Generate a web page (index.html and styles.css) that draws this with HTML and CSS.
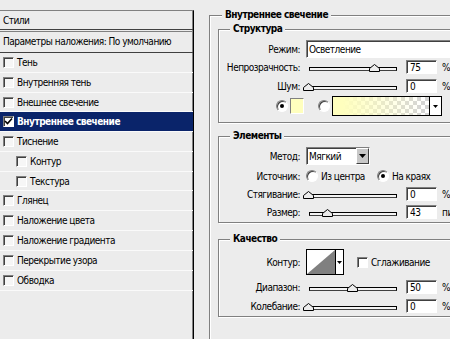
FILE: index.html
```html
<!DOCTYPE html>
<html lang="ru">
<head>
<meta charset="utf-8">
<title>Стиль слоя</title>
<link rel="stylesheet" href="styles.css">
</head>
<body>
<div class="app">
  <div class="styles-panel">
    <div class="panel-head">Стили</div>
    <div class="panel-defaults">Параметры наложения: По умолчанию</div>
    <ul class="fx-list">
      <li class="fx"><span class="cb"></span>Тень</li>
      <li class="fx"><span class="cb"></span>Внутренняя тень</li>
      <li class="fx short"><span class="cb"></span>Внешнее свечение</li>
      <li class="fx selected"><span class="cb checked"><svg width="9" height="9" viewBox="0 0 9 9"><path d="M1 4 L3.5 6.5 L8 1.5" fill="none" stroke="#000" stroke-width="1.6"/></svg></span>Внутреннее свечение</li>
      <li class="fx"><span class="cb"></span>Тиснение</li>
      <li class="fx sub"><span class="cb"></span>Контур</li>
      <li class="fx sub short"><span class="cb"></span>Текстура</li>
      <li class="fx"><span class="cb"></span>Глянец</li>
      <li class="fx"><span class="cb"></span>Наложение цвета</li>
      <li class="fx"><span class="cb"></span>Наложение градиента</li>
      <li class="fx"><span class="cb"></span>Перекрытие узора</li>
      <li class="fx"><span class="cb"></span>Обводка</li>
    </ul>
  </div>

  <div class="settings">
    <fieldset class="group outer">
      <legend class="outer-title">Внутреннее свечение</legend>

      <fieldset class="group box structure">
        <legend class="box-title">Структура</legend>
        <div class="row r-first">
          <span class="lbl">Режим:</span>
          <div class="field mode">Осветление</div>
        </div>
        <div class="row r-slider r-gap2">
          <span class="lbl">Непрозрачность:</span>
          <div class="slider"><div class="track"></div><svg class="thumb" style="left:63px" width="11" height="8" viewBox="0 0 11 8"><polygon points="0.5,7.5 0.5,4.5 5.5,0.5 10.5,4.5 10.5,7.5" fill="#ececec" stroke="#000"/></svg></div>
          <div class="num">75</div><span class="unit">%</span>
        </div>
        <div class="row r-slider r-gap5">
          <span class="lbl">Шум:</span>
          <div class="slider"><div class="track"></div><svg class="thumb" style="left:-3px" width="11" height="8" viewBox="0 0 11 8"><polygon points="0.5,7.5 0.5,4.5 5.5,0.5 10.5,4.5 10.5,7.5" fill="#ececec" stroke="#000"/></svg></div>
          <div class="num">0</div><span class="unit">%</span>
        </div>
        <div class="row r-colors">
          <span class="radio on"></span>
          <span class="swatch"></span>
          <span class="radio gap-radio"></span>
          <div class="gradient">
            <div class="grad-fill"></div>
            <div class="drop"><svg width="5" height="3" viewBox="0 0 5 3"><polygon points="0,0 5,0 2.5,3" fill="#000"/></svg></div>
          </div>
        </div>
      </fieldset>

      <fieldset class="group box elements">
        <legend class="box-title">Элементы</legend>
        <div class="row r-first">
          <span class="lbl">Метод:</span>
          <div class="field method"><span class="method-text">Мягкий</span><span class="btn"><svg width="7" height="4" viewBox="0 0 7 4"><polygon points="0,0 7,0 3.5,4" fill="#000"/></svg></span></div>
        </div>
        <div class="row r-slider r-gap4">
          <span class="lbl">Источник:</span>
          <span class="radio"></span><span class="opt">Из центра</span>
          <span class="radio on gap-opt"></span><span class="opt">На краях</span>
        </div>
        <div class="row r-slider r-gap4">
          <span class="lbl">Стягивание:</span>
          <div class="slider"><div class="track"></div><svg class="thumb" style="left:-3px" width="11" height="8" viewBox="0 0 11 8"><polygon points="0.5,7.5 0.5,4.5 5.5,0.5 10.5,4.5 10.5,7.5" fill="#ececec" stroke="#000"/></svg></div>
          <div class="num">0</div><span class="unit">%</span>
        </div>
        <div class="row r-slider r-gap4">
          <span class="lbl">Размер:</span>
          <div class="slider"><div class="track"></div><svg class="thumb" style="left:16px" width="11" height="8" viewBox="0 0 11 8"><polygon points="0.5,7.5 0.5,4.5 5.5,0.5 10.5,4.5 10.5,7.5" fill="#ececec" stroke="#000"/></svg></div>
          <div class="num">43</div><span class="unit">пикс.</span>
        </div>
      </fieldset>

      <fieldset class="group box quality">
        <legend class="box-title">Качество</legend>
        <div class="row r-contour">
          <span class="lbl">Контур:</span>
          <div class="contour">
            <svg class="contour-pic" width="28" height="24" viewBox="0 0 28 24"><rect width="28" height="24" fill="#fff"/><polygon points="0,24 28,0 28,24" fill="#808080"/></svg>
            <span class="contour-drop"><svg width="5" height="3" viewBox="0 0 5 3"><polygon points="0,0 5,0 2.5,3" fill="#000"/></svg></span>
          </div>
          <span class="cb aa"></span><span class="opt">Сглаживание</span>
        </div>
        <div class="row r-slider r-gap5">
          <span class="lbl">Диапазон:</span>
          <div class="slider"><div class="track"></div><svg class="thumb" style="left:41px" width="11" height="8" viewBox="0 0 11 8"><polygon points="0.5,7.5 0.5,4.5 5.5,0.5 10.5,4.5 10.5,7.5" fill="#ececec" stroke="#000"/></svg></div>
          <div class="num">50</div><span class="unit">%</span>
        </div>
        <div class="row r-slider r-gap5">
          <span class="lbl">Колебание:</span>
          <div class="slider"><div class="track"></div><svg class="thumb" style="left:-3px" width="11" height="8" viewBox="0 0 11 8"><polygon points="0.5,7.5 0.5,4.5 5.5,0.5 10.5,4.5 10.5,7.5" fill="#ececec" stroke="#000"/></svg></div>
          <div class="num">0</div><span class="unit">%</span>
        </div>
      </fieldset>
    </fieldset>
  </div>
</div>
</body>
</html>
```

FILE: styles.css
```css
* { box-sizing: border-box; }

html, body {
  margin: 0;
  padding: 0;
  background: #ececec;
}

body {
  width: 450px;
  height: 339px;
  overflow: hidden;
  font-family: "DejaVu Sans Condensed", "DejaVu Sans", sans-serif;
  font-size: 10px;
  letter-spacing: -0.5px;
  color: #000;
}

.app {
  display: flex;
  width: 450px;
  height: 339px;
  overflow: hidden;
}

/* ---------- left panel ---------- */
.styles-panel {
  flex: 0 0 194px;
  margin-top: 10px;
  border-top: 1px solid #808080;
  border-right: 1px solid #000;
  box-shadow: inset -1px 0 0 #808080;
}

.panel-head {
  height: 19px;
  line-height: 19px;
  padding-left: 3px;
  border-bottom: 1px solid #404040;
}

.panel-defaults {
  height: 22px;
  line-height: 20px;
  padding-left: 3px;
  margin-top: 1px;
  border-top: 1px solid #808080;
  border-bottom: 1px solid #404040;
  white-space: nowrap;
}

.fx-list {
  list-style: none;
  margin: 0;
  padding: 0;
}

.fx {
  display: flex;
  align-items: center;
  height: 20px;
  padding-left: 3px;
  border-bottom: 1px solid #fafafa;
  white-space: nowrap;
}

.fx.short { height: 19px; }

.fx.sub { padding-left: 16px; }

.fx.selected {
  background: #0a246a;
  color: #fff;
  font-weight: bold;
}

.cb {
  flex: none;
  display: inline-flex;
  align-items: center;
  justify-content: center;
  width: 11px;
  height: 11px;
  margin-right: 3px;
  background: #f6f6f6;
  border: 1px solid;
  border-color: #808080 #fff #fff #808080;
  box-shadow: inset 1px 1px 0 #404040;
}

.cb.checked {
  background: #fff;
}

/* ---------- right settings ---------- */
.settings {
  flex: 0 0 300px;
}

.group {
  margin: 0;
  min-width: 0;
  border: 1px solid #808080;
  box-shadow: inset 1px 1px 0 #fff, 1px 1px 0 #fff;
}

.group legend {
  padding: 0 3px;
  height: 14px;
  line-height: 14px;
  font-weight: bold;
  background: #ececec;
  white-space: nowrap;
}

.outer {
  margin: 8px 0 0 15px;
  padding: 0 0 40px 8px;
  height: 360px;
}

.outer-title { margin-left: 4px; }

.box {
  padding: 0;
}

.box-title { margin-left: 11px; }

.structure { padding-bottom: 6px; }
.elements { margin-top: 6px; padding-bottom: 3px; }
.quality { margin-top: 9px; padding-bottom: 3px; }

.row {
  display: flex;
  align-items: center;
  white-space: nowrap;
}

.r-first { height: 18px; margin-top: 4px; }
.r-slider { height: 14px; }
.r-gap2 { margin-top: 2px; }
.r-gap4 { margin-top: 4px; }
.r-gap5 { margin-top: 5px; }

.lbl {
  flex: none;
  width: 81px;
  margin-right: 6px;
  display: flex;
  justify-content: flex-end;
}

.field {
  flex: none;
  height: 18px;
  background: #fff;
  border: 1px solid;
  border-color: #808080 #fff #fff #808080;
  box-shadow: inset 1px 1px 0 #404040;
  display: flex;
  align-items: center;
  padding-left: 2px;
}

.mode { width: 200px; }

.method {
  width: 64px;
  padding-right: 0;
  justify-content: space-between;
}

.btn {
  width: 13px;
  height: 16px;
  background: #c8c8c8;
  border: 1px solid;
  border-color: #fff #404040 #404040 #fff;
  display: flex;
  align-items: center;
  justify-content: center;
}

/* slider */
.slider {
  flex: none;
  position: relative;
  width: 92px;
  height: 14px;
}

.track {
  position: absolute;
  left: 3px;
  top: 7px;
  width: 88px;
  height: 4px;
  background: #f4f4f4;
  border: 1px solid #000;
  border-bottom-color: #404040;
}

.thumb {
  position: absolute;
  top: 4px;
}

.num {
  flex: none;
  width: 31px;
  height: 14px;
  margin-left: 8px;
  padding-left: 3px;
  background: #fff;
  border: 1px solid;
  border-color: #808080 #fff #fff #808080;
  box-shadow: inset 1px 1px 0 #404040;
  display: flex;
  align-items: center;
}

.unit { margin-left: 5px; }

/* radios */
.radio {
  flex: none;
  position: relative;
  width: 12px;
  height: 12px;
  border-radius: 50%;
  background: #fff;
  border: 1px solid;
  border-color: #808080 #fff #fff #808080;
  box-shadow: inset 1px 1px 0 #404040;
}

.radio.on::after {
  content: "";
  position: absolute;
  left: 3px;
  top: 3px;
  width: 4px;
  height: 4px;
  border-radius: 50%;
  background: #000;
}

.opt { margin-left: 3px; }
.gap-opt { margin-left: 12px; }

/* color row */
.r-colors {
  height: 20px;
  margin-top: 3px;
  padding-left: 57px;
}

.swatch {
  flex: none;
  width: 14px;
  height: 16px;
  margin-left: 2px;
  background: #ffffbe;
  border: 1px solid;
  border-color: #808080 #fff #fff #808080;
}

.gap-radio { margin-left: 14px; }

.gradient {
  flex: none;
  display: flex;
  width: 110px;
  height: 20px;
  margin-left: 2px;
  border: 1px solid #000;
  background: #fff;
}

.grad-fill {
  flex: 1;
  background:
    linear-gradient(to right, #ffffbe 0%, #ffffbe 10%, rgba(255,255,190,0) 95%),
    repeating-conic-gradient(#d4d4d4 0 25%, #fff 0 50%) 0 0 / 8px 8px;
}

.drop {
  flex: none;
  width: 12px;
  border-left: 1px solid #000;
  display: flex;
  align-items: center;
  justify-content: center;
  background: #fff;
}

/* contour row */
.r-contour { height: 26px; margin-top: 3px; }

.contour {
  flex: none;
  display: flex;
  height: 26px;
  border: 1px solid #000;
  background: #fff;
}

.contour-pic { display: block; }

.contour-drop {
  width: 8px;
  border-left: 1px solid #000;
  display: flex;
  align-items: center;
  justify-content: center;
}

.cb.aa { margin-left: 13px; margin-right: 0; background: #fff; }
```
